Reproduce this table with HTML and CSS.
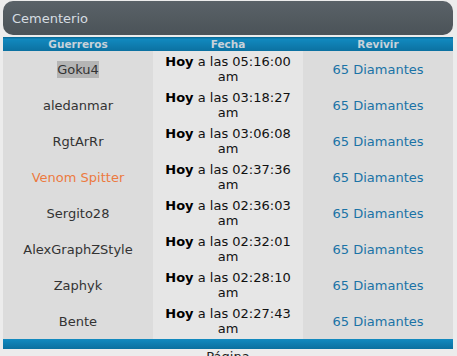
FILE: index.html
```html
<!DOCTYPE html>
<html>
<head>
<meta charset="utf-8">
<link rel="stylesheet" href="styles.css">
</head>
<body>
<div class="panel">
  <div class="title">Cementerio</div>
  <table class="grid">
    <thead>
      <tr><th>Guerreros</th><th>Fecha</th><th>Revivir</th></tr>
    </thead>
    <tbody>
      <tr><td class="name"><span class="sel">Goku4</span></td><td class="date"><b>Hoy</b> a las 05:16:00 am</td><td class="rev">65 Diamantes</td></tr>
      <tr><td class="name">aledanmar</td><td class="date"><b>Hoy</b> a las 03:18:27 am</td><td class="rev">65 Diamantes</td></tr>
      <tr><td class="name">RgtArRr</td><td class="date"><b>Hoy</b> a las 03:06:08 am</td><td class="rev">65 Diamantes</td></tr>
      <tr><td class="name orange">Venom Spitter</td><td class="date"><b>Hoy</b> a las 02:37:36 am</td><td class="rev">65 Diamantes</td></tr>
      <tr><td class="name">Sergito28</td><td class="date"><b>Hoy</b> a las 02:36:03 am</td><td class="rev">65 Diamantes</td></tr>
      <tr><td class="name">AlexGraphZStyle</td><td class="date"><b>Hoy</b> a las 02:32:01 am</td><td class="rev">65 Diamantes</td></tr>
      <tr><td class="name">Zaphyk</td><td class="date"><b>Hoy</b> a las 02:28:10 am</td><td class="rev">65 Diamantes</td></tr>
      <tr><td class="name">Bente</td><td class="date"><b>Hoy</b> a las 02:27:43 am</td><td class="rev">65 Diamantes</td></tr>
    </tbody>
  </table>
  <div class="footbar"></div>
  <div class="pager">Página</div>
</div>
</body>
</html>
```
FILE: styles.css
```css
html, body {
  margin: 0;
  padding: 0;
  background: #ececec;
}
body {
  font-family: "DejaVu Sans", Verdana, sans-serif;
  padding: 1px 4px 0 3px;
}
.panel {
  width: 450px;
}
.title {
  height: 34px;
  box-sizing: border-box;
  padding: 10px 0 0 9px;
  border-radius: 10px;
  background: linear-gradient(#5a6268, #4b5358);
  color: #d6dde2;
  font-size: 13px;
  line-height: 15px;
}
.grid {
  margin-top: 2px;
  width: 450px;
  border-collapse: collapse;
  table-layout: fixed;
}
.grid th {
  height: 13px;
  padding: 0;
  background: linear-gradient(#128ac0, #0b709f);
  color: #c8d2da;
  font-size: 10.5px;
  font-weight: bold;
  line-height: 13px;
  text-align: center;
  border-top: 1px solid #0b6e9c;
}
.grid td {
  height: 30px;
  padding: 3px 0;
  text-align: center;
  font-size: 13px;
  line-height: 15px;
  vertical-align: middle;
}
.name {
  background: #dcdcdc;
  color: #333;
}
.name.orange {
  color: #ec7a3f;
}
.sel {
  background: #b5b5b5;
  padding: 1px 0;
}
.date {
  background: #e6e6e6;
  color: #111;
  padding: 3px 8px !important;
}
.date b {
  color: #000;
}
.rev {
  background: #dcdcdc;
  color: #1a73a6;
}
.footbar {
  height: 10px;
  background: linear-gradient(#128ac0, #0b709f);
}
.pager {
  text-align: center;
  font-size: 13px;
  line-height: 15px;
  color: #222;
}
```
